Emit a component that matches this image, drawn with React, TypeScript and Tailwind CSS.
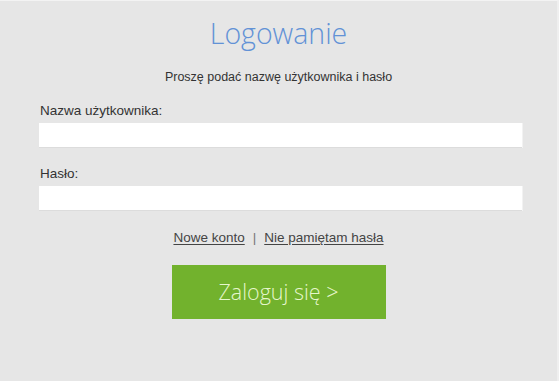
import React from "react";

export default function App() {
  const sans = { fontFamily: "'Liberation Sans', sans-serif" };
  return (
    <div className="w-[559px] h-[381px] bg-[#e6e6e6] border-t border-t-[#f3f3f3] border-r-2 border-r-[#efefef] text-[#333]" style={sans}>
      <div className="flex flex-col items-center pt-[13px]">
        <h1 className="text-[28.5px] leading-[38px] font-light text-[#6292d6]" style={{ fontFamily: "'Open Sans', sans-serif" }}>
          Logowanie
        </h1>
        <p className="mt-[17px] text-[12.5px] leading-[16px] text-[#333]">
          Proszę podać nazwę użytkownika i hasło
        </p>
      </div>
      <div className="px-[39px] pt-[18px] flex flex-col">
        <label className="text-[13.5px] leading-[16px] pl-px text-[#333]">Nazwa użytkownika:</label>
        <div className="mt-[4px] h-[25px] w-[483px] bg-white border-b border-[#dcdcdc] shadow-[1px_0_0_#f2f2f2]" />
        <label className="mt-[18px] text-[13.5px] leading-[16px] pl-px text-[#333]">Hasło:</label>
        <div className="mt-[4px] h-[25px] w-[483px] bg-white border-b border-[#dcdcdc] shadow-[1px_0_0_#f2f2f2]" />
        <div className="mt-[19px] flex justify-center items-center gap-[8px] text-[13.5px] leading-[16px] text-[#444]">
          <a className="underline underline-offset-2">Nowe konto</a>
          <span className="text-[#777]">|</span>
          <a className="underline underline-offset-2">Nie pamiętam hasła</a>
        </div>
        <div className="mt-[19px] flex justify-center">
          <button className="w-[214px] h-[54px] bg-[#72b22d] text-[#e6f6cc] text-[21.5px] font-light" style={{ fontFamily: "'Open Sans', sans-serif" }}>
            Zaloguj się &gt;
          </button>
        </div>
      </div>
    </div>
  );
}
